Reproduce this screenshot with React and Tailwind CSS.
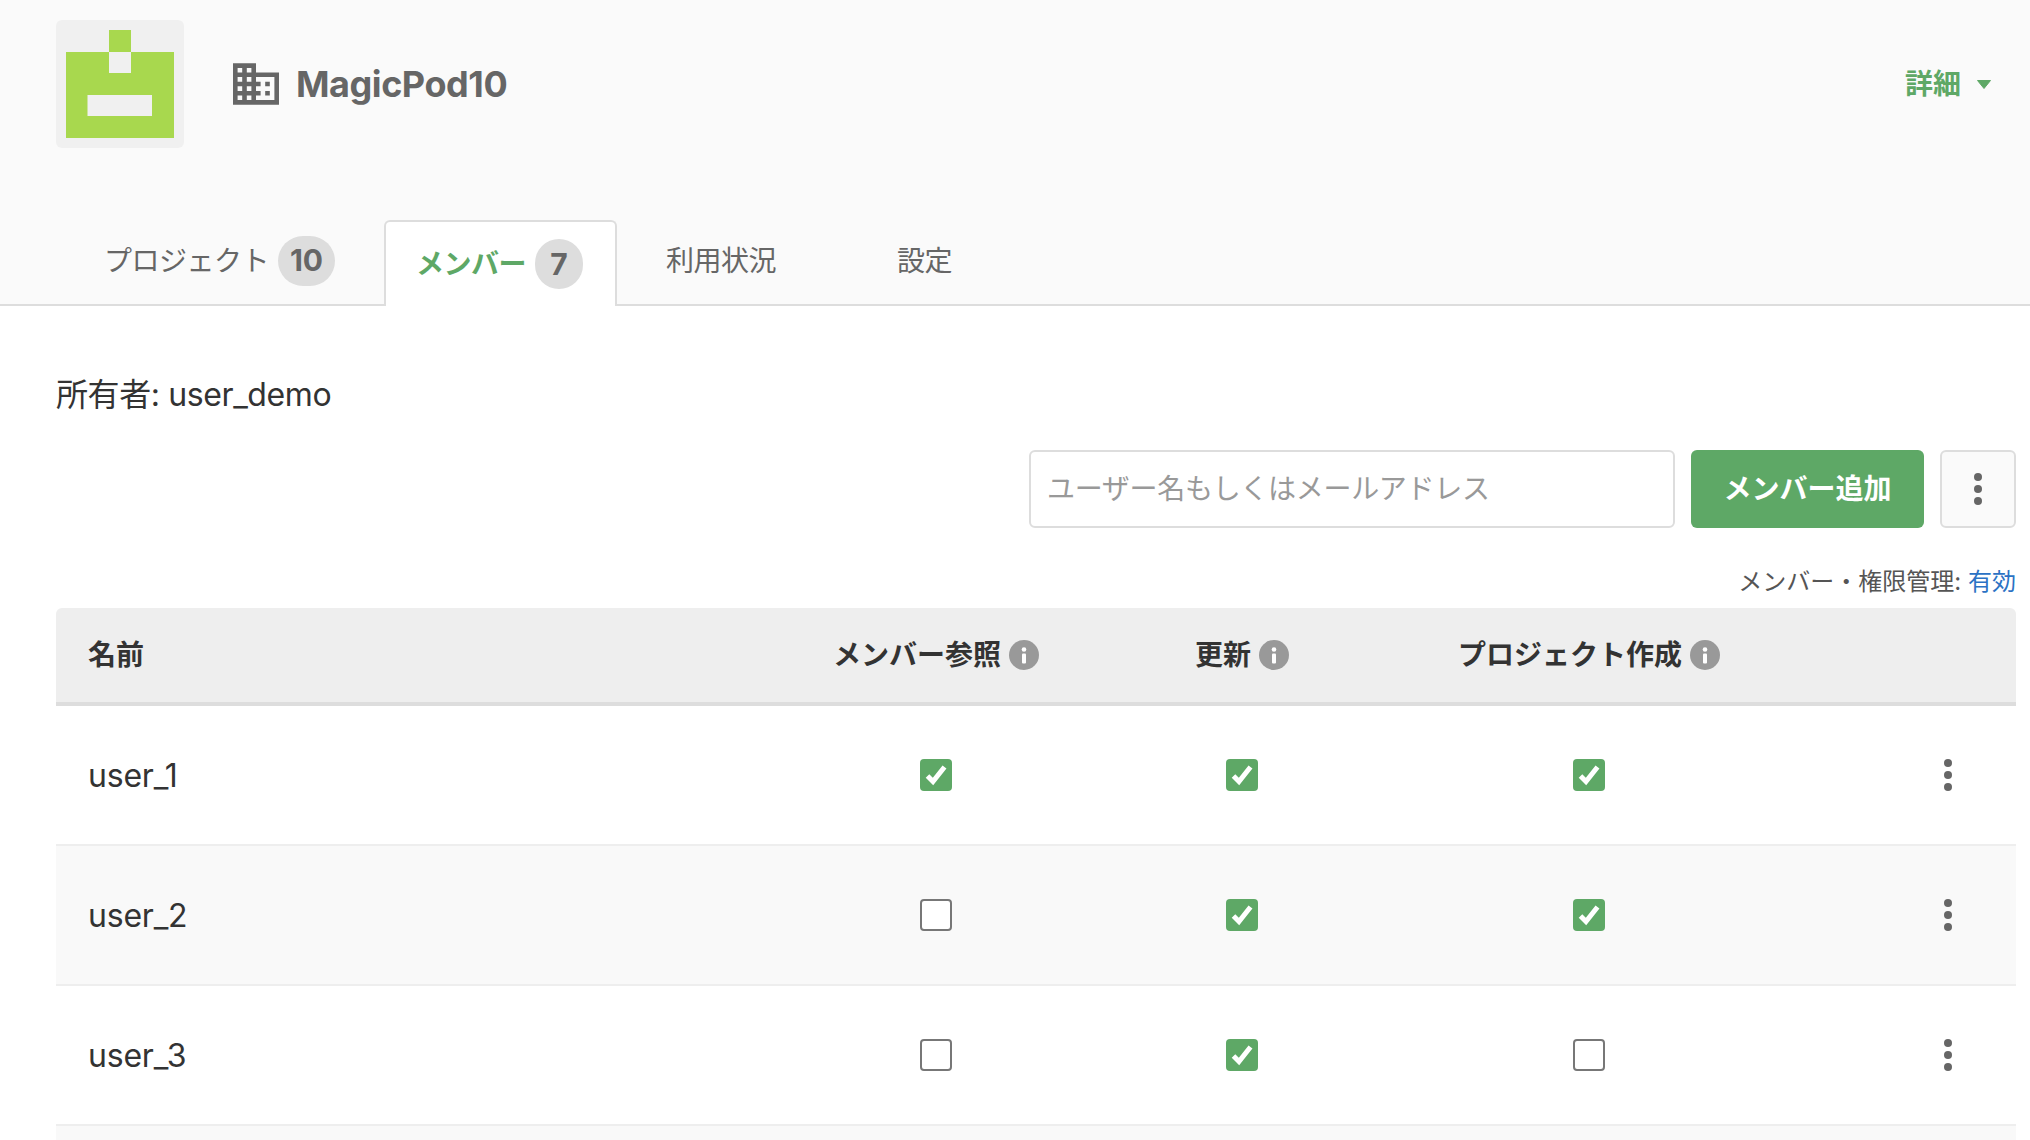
const FONT = 'font-["Inter","Noto_Sans_CJK_JP",sans-serif]'

const MEMBERS = [
  { name: 'user_1', view: true, update: true, create: true },
  { name: 'user_2', view: false, update: true, create: true },
  { name: 'user_3', view: false, update: true, create: false }
]

const GRID = 'grid grid-cols-[734px_292px_320px_374px_240px] items-center'

const Logo = () => (
  <div className="w-[128px] h-[128px] shrink-0 rounded-[6px] bg-[#f0f0f0] overflow-hidden">
    <svg viewBox="0 0 128 128" className="w-full h-full">
      <rect x="10" y="32" width="108" height="86" fill="#a8d84e" />
      <rect x="53" y="10" width="22" height="22" fill="#a8d84e" />
      <rect x="53" y="32" width="22" height="21" fill="#f0f0f0" />
      <rect x="31.5" y="75" width="64.5" height="21" fill="#f0f0f0" />
    </svg>
  </div>
)

const BuildingIcon = () => (
  <svg viewBox="2 3 20 18" className="w-[46px] h-[42px] shrink-0" fill="#666666">
    <path d="M12 7V3H2v18h20V7H12zM6 19H4v-2h2v2zm0-4H4v-2h2v2zm0-4H4V9h2v2zm0-4H4V5h2v2zm4 12H8v-2h2v2zm0-4H8v-2h2v2zm0-4H8V9h2v2zm0-4H8V5h2v2zm10 12h-8v-2h2v-2h-2v-2h2v-2h-2V9h8v10zm-2-8h-2v2h2v-2zm0 4h-2v2h2v-2z" />
  </svg>
)

const InfoIcon = () => (
  <svg viewBox="0 0 30 30" className="w-[30px] h-[30px] shrink-0">
    <circle cx="15" cy="15" r="15" fill="#999999" />
    <circle cx="15" cy="9.5" r="2.3" fill="#ffffff" />
    <rect x="13" y="13.5" width="4" height="10" rx="1" fill="#ffffff" />
  </svg>
)

const Kebab = () => (
  <span className="flex flex-col items-center gap-[4px]">
    <span className="w-[8px] h-[8px] rounded-full bg-[#666666]" />
    <span className="w-[8px] h-[8px] rounded-full bg-[#666666]" />
    <span className="w-[8px] h-[8px] rounded-full bg-[#666666]" />
  </span>
)

const Badge = ({ children, wide }) => (
  <span
    className={`flex items-center justify-center h-[50px] rounded-full bg-[#dddddd] text-[#666666] text-[30px] font-bold tracking-normal ${
      wide ? 'w-[57px]' : 'w-[48px]'
    }`}
  >
    {children}
  </span>
)

const Checkbox = ({ checked }) =>
  checked ? (
    <span className="block w-[32px] h-[32px] rounded-[4px] bg-[#5ea866]">
      <svg viewBox="0 0 32 32" className="w-[32px] h-[32px]" fill="none" stroke="#ffffff" strokeWidth="5">
        <path d="M7.5 17l5.5 5.5L24.5 8" />
      </svg>
    </span>
  ) : (
    <span className="block w-[32px] h-[32px] rounded-[4px] border-2 border-[#777777] bg-white" />
  )

const HeadCell = ({ label }) => (
  <div className="flex items-center justify-center gap-[8px] font-bold text-[28px] text-[#333333]">
    <span>{label}</span>
    <InfoIcon />
  </div>
)

export default function App() {
  return (
    <div className={`h-screen overflow-hidden bg-white ${FONT}`}>
      {/* Org header */}
      <div className="bg-[#fafafa] border-b-2 border-[#dddddd]">
        <div className="flex items-center pt-5 pl-14 pr-[39px]">
          <Logo />
          <div className="ml-[49px] mr-[17px]">
            <BuildingIcon />
          </div>
          <h1 className="text-[36px] font-bold text-[#666666] tracking-[-0.45px]">MagicPod10</h1>
          <button className="ml-auto flex items-center gap-[16px] text-[28px] font-bold text-[#5ea866]">
            詳細
            <svg viewBox="0 0 14 9" className="w-[14px] h-[9px]" fill="#5ea866" stroke="#5ea866" strokeWidth="1" strokeLinejoin="round">
              <path d="M.5.5h13L7 8.5z" />
            </svg>
          </button>
        </div>

        {/* Tabs */}
        <div className="flex items-end h-[86px] mt-[72px] pl-[71px] -mb-[2px] tracking-[-0.5px]">
          <div className="flex items-center gap-[9px] h-full pl-[33px] pr-[34px] pb-[5px] mr-[15px] text-[28px] text-[#666666]">
            プロジェクト
            <Badge wide>10</Badge>
          </div>
          <div className="flex items-center gap-[9px] h-full pl-[30px] pr-[32px] rounded-t-[6px] border-2 border-b-0 border-[#dddddd] bg-white text-[28px] font-bold text-[#5ea866]">
            メンバー
            <Badge>7</Badge>
          </div>
          <div className="flex items-center h-full ml-[15px] px-[34px] pb-[5px] text-[28px] text-[#666666]">利用状況</div>
          <div className="flex items-center h-full ml-[53px] px-[34px] pb-[5px] text-[28px] text-[#666666]">設定</div>
        </div>
      </div>

      <div className="pl-14 pr-[14px]">
        <p className="mt-[69px] text-[32px] leading-[40px] text-[#333333] tracking-[-0.4px]">所有者: user_demo</p>

        {/* Search + add */}
        <div className="flex justify-end gap-[16px] mt-[35px]">
          <input
            placeholder="ユーザー名もしくはメールアドレス"
            className="w-[646px] h-[78px] px-[16px] rounded-[6px] border-2 border-[#dddddd] bg-white text-[28px] tracking-[-0.3px] placeholder:text-[#999999] outline-none"
          />
          <button className="w-[233px] h-[78px] rounded-[6px] bg-[#5ea866] text-white text-[28px] font-bold">
            メンバー追加
          </button>
          <button className="flex items-center justify-center w-[76px] h-[78px] rounded-[6px] border-2 border-[#dddddd] bg-[#fafafa]">
            <Kebab />
          </button>
        </div>

        <p className="mt-[38px] h-[32px] leading-[32px] text-right text-[24px] text-[#555555]">
          メンバー・権限管理: <span className="text-[#2b72c4]">有効</span>
        </p>

        {/* Members table */}
        <div className={`${GRID} h-[98px] mt-[10px] rounded-t-[6px] bg-[#eeeeee] border-b-4 border-[#dddddd]`}>
          <div className="pl-[32px] font-bold text-[28px] text-[#333333]">名前</div>
          <HeadCell label="メンバー参照" />
          <HeadCell label="更新" />
          <HeadCell label="プロジェクト作成" />
          <div />
        </div>

        {MEMBERS.map((m, i) => (
          <div
            key={m.name}
            className={`${GRID} h-[140px] border-b-2 border-[#eeeeee] ${i % 2 === 1 ? 'bg-[#f9f9f9]' : 'bg-white'}`}
          >
            <div className="pl-[32px] pt-[2px] text-[32px] text-[#333333] tracking-[-0.2px]">{m.name}</div>
            <div className="flex justify-center"><Checkbox checked={m.view} /></div>
            <div className="flex justify-center"><Checkbox checked={m.update} /></div>
            <div className="flex justify-center"><Checkbox checked={m.create} /></div>
            <div className="flex justify-end pr-[64px]"><Kebab /></div>
          </div>
        ))}
        <div className="h-[40px] bg-[#f9f9f9]" />
      </div>
    </div>
  )
}
